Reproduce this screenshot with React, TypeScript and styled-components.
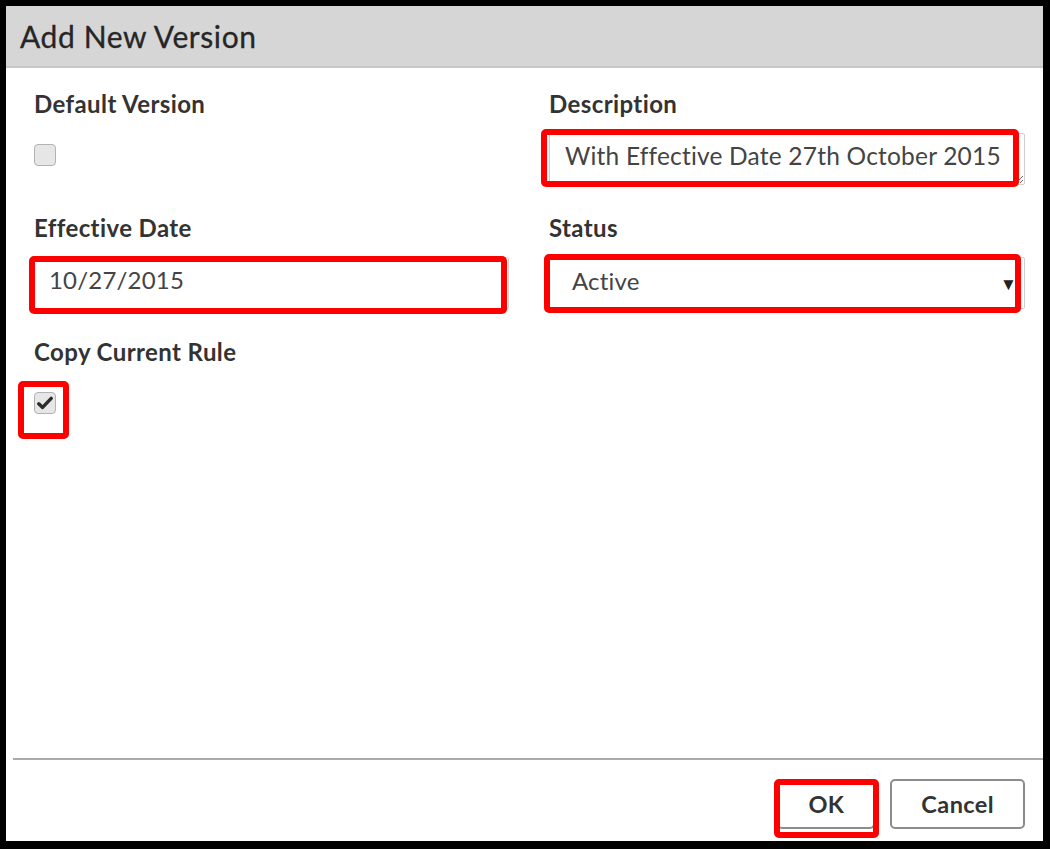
import React from 'react';
import styled, { createGlobalStyle } from 'styled-components';

const Global = createGlobalStyle`
  html, body { margin: 0; padding: 0; background: #000; }
  body { font-family: Lato, "Open Sans", sans-serif; }
  * { box-sizing: border-box; }
`;

const Frame = styled.div`
  width: 1050px;
  height: 849px;
  padding: 6px 7px 8px 6px;
  background: #000;
`;

const Dialog = styled.div`
  height: 100%;
  background: #fff;
  display: flex;
  flex-direction: column;
`;

const Header = styled.div`
  height: 62px;
  flex: none;
  background: #d6d6d6;
  border-bottom: 2px solid #c6c6c6;
  display: flex;
  align-items: center;
  padding-left: 14px;
`;

const Title = styled.h1`
  margin: 0;
  font-family: Lato, sans-serif;
  font-size: 30px;
  font-weight: 400;
  color: #262626;
  letter-spacing: 0.6px;
  -webkit-text-stroke: 0.3px #262626;
`;

const Body = styled.div`
  flex: 1;
  padding: 21px 18px 0 28px;
  display: grid;
  grid-template-columns: 475px 476px;
  column-gap: 40px;
  row-gap: 28px;
  align-content: start;
`;

const Field = styled.div`
  display: flex;
  flex-direction: column;
  align-items: flex-start;
`;

const Label = styled.label<{ $gap: number }>`
  font-family: Lato, sans-serif;
  font-size: 24px;
  font-weight: 700;
  letter-spacing: 0.4px;
  line-height: 30px;
  color: #333;
  margin-bottom: ${(p) => p.$gap}px;
`;

const Marked = styled.div`
  position: relative;
  display: inline-flex;
  align-self: stretch;
`;

const MarkedInline = styled(Marked)`
  align-self: flex-start;
`;

const Ring = styled.span<{ $t: number; $r: number; $b: number; $l: number }>`
  position: absolute;
  top: ${(p) => p.$t}px;
  right: ${(p) => p.$r}px;
  bottom: ${(p) => p.$b}px;
  left: ${(p) => p.$l}px;
  border: 6px solid #ff0000;
  border-radius: 5px;
  pointer-events: none;
`;

const TextArea = styled.textarea`
  width: 100%;
  height: 52px;
  border: 1px solid #cfcfcf;
  border-radius: 2px;
  padding: 8px 15px;
  font-family: Lato, sans-serif;
  font-size: 24.5px;
  letter-spacing: 0.2px;
  line-height: 28px;
  color: #444;
  resize: both;
  overflow: hidden;
  white-space: nowrap;
  background: #fff;
  outline: none;
`;

const TextInput = styled.input`
  width: 100%;
  height: 52px;
  border: 1px solid #cfcfcf;
  border-radius: 2px;
  padding: 0 14px 8px;
  font-family: Lato, sans-serif;
  font-size: 24px;
  letter-spacing: 0.2px;
  color: #444;
  background: #fff;
  outline: none;
`;

const SelectBox = styled.div`
  width: 100%;
  height: 52px;
  border: 1px solid #cfcfcf;
  border-radius: 2px;
  padding: 0 7px 6px 22px;
  display: flex;
  align-items: center;
  justify-content: space-between;
  font-family: Lato, sans-serif;
  font-size: 24px;
  letter-spacing: 0.2px;
  color: #444;
  background: #fff;
`;

const Arrow = styled.span`
  font-size: 17px;
  color: #222;
  margin-top: 8px;
`;

const Check = styled.span`
  width: 22px;
  height: 22px;
  border: 1.5px solid #b3b3b3;
  border-radius: 4px;
  background: #e6e6e6;
  display: flex;
  align-items: center;
  justify-content: center;
`;

const Footer = styled.div`
  flex: none;
  margin-left: 7px;
  border-top: 2px solid #ababab;
  padding: 19px 18px 12px 0;
  display: flex;
  justify-content: flex-end;
  gap: 15px;
`;

const Button = styled.button`
  height: 50px;
  padding: 0 29px;
  border: 2px solid #8c8c8c;
  border-radius: 5px;
  background: #fff;
  font-family: Lato, sans-serif;
  font-size: 23.5px;
  letter-spacing: 0.4px;
  font-weight: 700;
  color: #333;
`;

export default function App() {
  return (
    <>
      <Global />
      <Frame>
        <Dialog>
          <Header>
            <Title>Add New Version</Title>
          </Header>
          <Body>
            <Field>
              <Label $gap={25}>Default Version</Label>
              <Check />
            </Field>
            <Field>
              <Label $gap={14}>Description</Label>
              <Marked>
                <TextArea readOnly value="With Effective Date 27th October 2015" />
                <Ring $t={-4} $r={6} $b={-2} $l={-8} />
              </Marked>
            </Field>
            <Field>
              <Label $gap={14}>Effective Date</Label>
              <Marked>
                <TextInput readOnly value="10/27/2015" />
                <Ring $t={-1} $r={2} $b={-5} $l={-5} />
              </Marked>
            </Field>
            <Field>
              <Label $gap={14}>Status</Label>
              <Marked>
                <SelectBox>
                  <span>Active</span>
                  <Arrow>▼</Arrow>
                </SelectBox>
                <Ring $t={-3} $r={4} $b={-4} $l={-5} />
              </Marked>
            </Field>
            <Field>
              <Label $gap={25}>Copy Current Rule</Label>
              <MarkedInline>
                <Check>
                  <svg width="16" height="14" viewBox="0 0 16 14">
                    <path d="M1.8 7.8 L5.6 11.4 L14.2 2.4" fill="none" stroke="#2b2b2b" strokeWidth="3.4" strokeLinecap="round" strokeLinejoin="round" />
                  </svg>
                </Check>
                <Ring $t={-11} $r={-13} $b={-25} $l={-16} />
              </MarkedInline>
            </Field>
          </Body>
          <Footer>
            <Marked style={{ alignSelf: 'auto' }}>
              <Button>OK</Button>
              <Ring $t={0} $r={-4} $b={-9} $l={-3} />
            </Marked>
            <Button>Cancel</Button>
          </Footer>
        </Dialog>
      </Frame>
    </>
  );
}
